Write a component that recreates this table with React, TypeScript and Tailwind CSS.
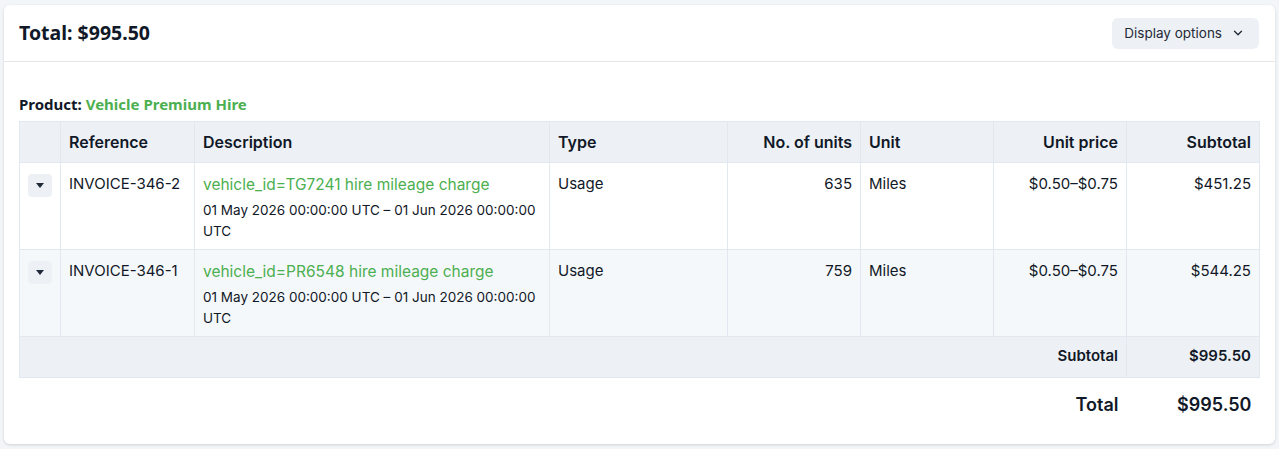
import React from 'react';

const rows = [
	{
		ref: 'INVOICE-346-2',
		desc: 'vehicle_id=TG7241 hire mileage charge',
		period: '01 May 2026 00:00:00 UTC – 01 Jun 2026 00:00:00 UTC',
		type: 'Usage',
		units: '635',
		unit: 'Miles',
		price: '$0.50–$0.75',
		subtotal: '$451.25',
	},
	{
		ref: 'INVOICE-346-1',
		desc: 'vehicle_id=PR6548 hire mileage charge',
		period: '01 May 2026 00:00:00 UTC – 01 Jun 2026 00:00:00 UTC',
		type: 'Usage',
		units: '759',
		unit: 'Miles',
		price: '$0.50–$0.75',
		subtotal: '$544.25',
	},
];

const ChevronDown = () => (
	<svg width="14" height="14" viewBox="0 0 24 24" fill="none" stroke="currentColor" strokeWidth="2.2" strokeLinecap="round" strokeLinejoin="round">
		<path d="m6 9 6 6 6-6" />
	</svg>
);

const Caret = () => (
	<svg width="8" height="5" viewBox="0 0 8 5">
		<path d="M0 0h8L4 5z" fill="#1f2937" />
	</svg>
);

const App: React.FC = () => {
	return (
		<div className="min-h-screen bg-[#f3f6f9] p-[4px] pt-[5px] font-['Inter',sans-serif] text-[#111827]">
			<div className="rounded-md bg-white shadow-[0_1px_3px_rgba(0,0,0,0.15)]">
				{/* header */}
				<div className="flex h-[57px] items-center justify-between border-b border-[#e5e7eb] pl-[15px] pr-[16px]">
					<h2 className="font-['Noto_Sans',sans-serif] text-[19.5px] font-bold">Total: $995.50</h2>
					<button className="flex h-[31px] items-center gap-[9px] rounded-md bg-[#edf1f5] pl-[12px] pr-[14px] text-[13.5px] text-[#1f2937]">
						Display options
						<ChevronDown />
					</button>
				</div>

				<div className="px-[15px] pb-[13px] pt-[31px]">
					<p className="mb-[5px] font-['Noto_Sans',sans-serif] text-[15px] font-bold">
						Product: <span className="text-[#4caf50]">Vehicle Premium Hire</span>
					</p>

					<table className="w-full border-collapse text-[15px]">
						<colgroup>
							<col className="w-[41px]" />
							<col className="w-[134px]" />
							<col className="w-[355px]" />
							<col className="w-[178px]" />
							<col className="w-[133px]" />
							<col className="w-[133px]" />
							<col className="w-[133px]" />
							<col className="w-[133px]" />
						</colgroup>
						<thead>
							<tr className="h-[41px] bg-[#edf1f5] text-[16px]">
								<th className="border border-[#e2e8f0]"></th>
								<th className="border border-[#e2e8f0] px-2 text-left font-semibold">Reference</th>
								<th className="border border-[#e2e8f0] px-2 text-left font-semibold">Description</th>
								<th className="border border-[#e2e8f0] px-2 text-left font-semibold">Type</th>
								<th className="border border-[#e2e8f0] px-2 text-right font-semibold">No. of units</th>
								<th className="border border-[#e2e8f0] px-2 text-left font-semibold">Unit</th>
								<th className="border border-[#e2e8f0] px-2 text-right font-semibold">Unit price</th>
								<th className="border border-[#e2e8f0] px-2 text-right font-semibold">Subtotal</th>
							</tr>
						</thead>
						<tbody>
							{rows.map((r, i) => (
								<tr key={r.ref} className={`h-[87px] align-top ${i % 2 === 1 ? 'bg-[#f5f8fb]' : 'bg-white'}`}>
									<td className="border border-[#e2e8f0] pt-[11px] pl-[8px]">
										<span className="flex h-[23px] w-[24px] items-center justify-center rounded bg-[#edf1f5]">
											<Caret />
										</span>
									</td>
									<td className="border border-[#e2e8f0] px-2 pt-[10px]">{r.ref}</td>
									<td className="border border-[#e2e8f0] px-2 pt-[10px]">
										<div className="text-[15.5px] text-[#4caf50]">{r.desc}</div>
										<div className="mt-[4px] break-all text-[13.5px] leading-[21px]">{r.period}</div>
									</td>
									<td className="border border-[#e2e8f0] px-2 pt-[10px]">{r.type}</td>
									<td className="border border-[#e2e8f0] px-2 pt-[10px] text-right">{r.units}</td>
									<td className="border border-[#e2e8f0] px-2 pt-[10px]">{r.unit}</td>
									<td className="border border-[#e2e8f0] px-2 pt-[10px] text-right">{r.price}</td>
									<td className="border border-[#e2e8f0] px-2 pt-[10px] text-right">{r.subtotal}</td>
								</tr>
							))}
							<tr className="h-[41px] bg-[#edf1f5] font-semibold">
								<td colSpan={7} className="border border-[#e2e8f0] px-2 text-right">Subtotal</td>
								<td className="border border-[#e2e8f0] px-2 text-right">$995.50</td>
							</tr>
							<tr className="h-[54px] text-[18px] font-semibold">
								<td colSpan={7} className="px-2 text-right">Total</td>
								<td className="px-2 text-right">$995.50</td>
							</tr>
						</tbody>
					</table>
				</div>
			</div>
		</div>
	);
};

export default App;
